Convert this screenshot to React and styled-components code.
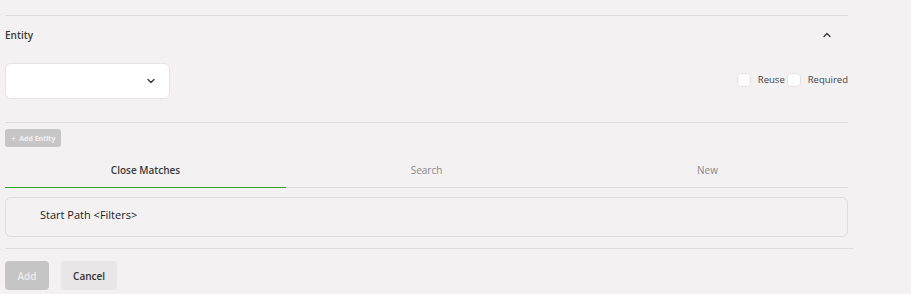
import React from 'react';
import styled, { createGlobalStyle } from 'styled-components';

const GlobalStyle = createGlobalStyle`
  html, body {
    margin: 0;
    padding: 0;
    background: #f3f1f2;
    font-family: "Open Sans", "Noto Sans", sans-serif;
    color: #333;
  }
`;

const Page = styled.div`
  width: 848px;
  padding: 15px 0 0 5px;
  box-sizing: border-box;
`;

const Divider = styled.div`
  height: 1px;
  background: #dedcdd;
  margin-right: ${p => p.$extend ? '-5px' : '0'};
`;

const Header = styled.div`
  display: flex;
  align-items: center;
  justify-content: space-between;
  height: 38px;
`;

const SectionTitle = styled.span`
  font-size: 10px;
  font-weight: 600;
  color: #3a3a3a;
`;

const IconButton = styled.span`
  display: flex;
  width: 14px;
  margin-right: 13px;
  color: #333;
`;

const EntityRow = styled.div`
  display: flex;
  align-items: center;
  justify-content: space-between;
  margin-top: 9px;
  margin-bottom: 23px;
`;

const Select = styled.div`
  width: 165px;
  height: 36px;
  box-sizing: border-box;
  background: #fff;
  border: 1px solid #e6e4e5;
  border-radius: 6px;
  display: flex;
  align-items: center;
  justify-content: flex-end;
  padding-right: 12px;
  color: #333;
`;

const Options = styled.div`
  display: flex;
  align-items: center;
  gap: 2px;
  margin-top: -3px;
`;

const Check = styled.label`
  display: flex;
  align-items: center;
  gap: 7px;
  font-size: 9.5px;
  color: #444;
`;

const Box = styled.span`
  width: 14px;
  height: 14px;
  background: #fff;
  border: 1px solid #e4e2e3;
  border-radius: 4px;
  box-sizing: border-box;
`;

const SmallButton = styled.button`
  display: flex;
  align-items: center;
  gap: 3px;
  height: 18px;
  margin-top: 6px;
  padding: 0 6px;
  border: none;
  border-radius: 3px;
  background: #c6c6c6;
  color: #f2f2f2;
  font-family: inherit;
  font-size: 7px;
  font-weight: 700;
`;

const Plus = styled.span`
  font-size: 9px;
  font-weight: 400;
`;

const Tabs = styled.div`
  display: grid;
  grid-template-columns: repeat(3, 1fr);
  margin-top: 11px;
  border-bottom: 1px solid #dedcdd;
`;

const Tab = styled.div`
  height: 30px;
  box-sizing: border-box;
  padding-bottom: 6px;
  display: flex;
  align-items: center;
  justify-content: center;
  font-size: 10px;
  font-weight: ${p => p.$active ? 600 : 400};
  color: ${p => p.$active ? '#3a3a3a' : '#888'};
  border-bottom: 1px solid ${p => p.$active ? '#2ea52e' : 'transparent'};
  margin-bottom: -1px;
`;

const Card = styled.div`
  margin-top: 9px;
  height: 40px;
  box-sizing: border-box;
  border: 1px solid #dedcdd;
  border-radius: 6px;
  display: flex;
  align-items: center;
  padding: 0 0 6px 34px;
  font-size: 11px;
  color: #222;
  margin-bottom: 11px;
`;

const Footer = styled.div`
  display: flex;
  gap: 12px;
  margin-top: 12px;
`;

const ActionButton = styled.button`
  height: 29px;
  padding: 0 ${p => p.$primary ? '12.5px' : '12px'};
  border: none;
  border-radius: 4px;
  font-family: inherit;
  font-size: 10px;
  font-weight: 600;
  background: ${p => p.$primary ? '#c5c5c5' : '#e8e6e7'};
  color: ${p => p.$primary ? '#ececec' : '#333'};
`;

const Chevron = ({ up }) => (
  <svg width="12" height="12" viewBox="0 0 24 24" fill="none" stroke="currentColor" strokeWidth="2.5" strokeLinecap="round" strokeLinejoin="round">
    <path d={up ? 'M6 15l6-6 6 6' : 'M6 9l6 6 6-6'} />
  </svg>
);

export default function App() {
  return (
    <>
      <GlobalStyle />
      <Page>
        <Divider />
        <Header>
          <SectionTitle>Entity</SectionTitle>
          <IconButton><Chevron up /></IconButton>
        </Header>
        <EntityRow>
          <Select><Chevron /></Select>
          <Options>
            <Check><Box />Reuse</Check>
            <Check><Box />Required</Check>
          </Options>
        </EntityRow>
        <Divider />
        <SmallButton><Plus>+</Plus>Add Entity</SmallButton>
        <Tabs>
          <Tab $active>Close Matches</Tab>
          <Tab>Search</Tab>
          <Tab>New</Tab>
        </Tabs>
        <Card>Start Path &lt;Filters&gt;</Card>
        <Divider $extend />
        <Footer>
          <ActionButton $primary>Add</ActionButton>
          <ActionButton>Cancel</ActionButton>
        </Footer>
      </Page>
    </>
  );
}
